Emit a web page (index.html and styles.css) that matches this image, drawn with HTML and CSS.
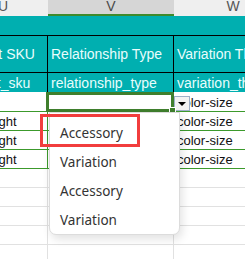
FILE: index.html
```html
<!DOCTYPE html>
<html lang="en">

<head>
    <meta charset="UTF-8" />
    <title>Sheet dropdown</title>
    <link rel="stylesheet" href="styles.css">
</head>

<body>
    <div class="sheet">
        <div class="col-head">U</div>
        <div class="col-head active">V</div>
        <div class="col-head">W</div>

        <div class="band"></div>

        <div class="cell head">Parent SKU</div>
        <div class="cell head">Relationship Type</div>
        <div class="cell head">Variation Theme</div>

        <div class="cell field">parent_sku</div>
        <div class="cell field">relationship_type</div>
        <div class="cell field">variation_theme</div>

        <div class="cell data first"></div>
        <div class="cell data first selected">
            <div class="selection"><span class="handle"></span></div>
            <ul class="dropdown">
                <li>Accessory</li>
                <li>Variation</li>
                <li>Accessory</li>
                <li>Variation</li>
            </ul>
            <div class="highlight"></div>
        </div>
        <div class="cell data first">color-size<span class="drop-btn"></span></div>

        <div class="cell data">desk-light</div>
        <div class="cell data"></div>
        <div class="cell data">color-size</div>

        <div class="cell data">desk-light</div>
        <div class="cell data"></div>
        <div class="cell data">color-size</div>

        <div class="cell data">desk-light</div>
        <div class="cell data"></div>
        <div class="cell data">color-size</div>

        <div class="cell empty"></div>
        <div class="cell empty"></div>
        <div class="cell empty"></div>
        <div class="cell empty"></div>
        <div class="cell empty"></div>
        <div class="cell empty"></div>
        <div class="cell empty"></div>
        <div class="cell empty"></div>
        <div class="cell empty"></div>
        <div class="cell empty"></div>
        <div class="cell empty"></div>
        <div class="cell empty"></div>
        <div class="cell empty"></div>
        <div class="cell empty"></div>
        <div class="cell empty"></div>
    </div>
</body>

</html>
```

FILE: styles.css
```css
body {
    margin: 0;
    background-color: #ffffff;
    overflow: hidden;
    font-family: 'Liberation Sans', Arial, sans-serif;
}

.sheet {
    display: grid;
    grid-template-columns: 90px 126px 118px;
    grid-template-rows: 16px 20px 37px 19px 20px repeat(8, 19px);
    margin-left: -42px;
    width: 334px;
}

.col-head {
    background-color: #efefef;
    color: #555;
    font-size: 14px;
    line-height: 12px;
    text-align: center;
    overflow: hidden;
}

.col-head.active {
    background-color: #d6d6d6;
    border-bottom: 2px solid #3f8a2c;
    color: #4a4a4a;
}

.band {
    grid-column: 1 / 4;
    background-color: #00afb0;
    border-bottom: 1px solid #000;
}

.cell {
    box-sizing: border-box;
    white-space: nowrap;
    overflow: hidden;
    padding: 0 3px;
    font-size: 13px;
    display: flex;
    align-items: center;
}

.head,
.field {
    background-color: #00afb0;
    color: #e8fdfd;
    font-size: 14px;
    border-right: 1px solid #000;
}

.head {
    border-bottom: 1px solid #000;
}

.data {
    color: #111;
    border-bottom: 1px solid #3c9a2c;
    border-right: 1px solid #3c9a2c;
    align-items: flex-end;
    padding-bottom: 1px;
}

.empty {
    border-bottom: 1px solid #e1e1e1;
    border-right: 1px solid #e1e1e1;
}

.selected {
    position: relative;
    overflow: visible;
    z-index: 2;
}

.data.first {
    overflow: visible;
    position: relative;
}

.selection {
    position: absolute;
    left: -2px;
    top: 0;
    right: -1px;
    bottom: -1px;
    border: 3px solid #3f7f2d;
}

.handle {
    position: absolute;
    right: -5px;
    bottom: -5px;
    width: 5px;
    height: 5px;
    background-color: #3f7f2d;
    border: 1px solid #fff;
}

.dropdown {
    position: absolute;
    left: 1px;
    top: 20px;
    width: 131px;
    height: 123px;
    box-sizing: border-box;
    margin: 0;
    padding: 6px 0 0 10px;
    list-style: none;
    background-color: #fff;
    border: 1px solid #dcdcdc;
    border-radius: 0 0 7px 7px;
    box-shadow: 2px 4px 10px rgba(0, 0, 0, 0.12);
    font-family: 'Noto Sans', sans-serif;
    font-size: 13.5px;
    color: #333;
}

.dropdown li {
    height: 29px;
    line-height: 29px;
}

.highlight {
    position: absolute;
    left: -8px;
    top: 22px;
    width: 100px;
    height: 33px;
    box-sizing: border-box;
    border: 3px solid #f23d3d;
}

.drop-btn {
    position: absolute;
    left: 0;
    top: 4px;
    width: 16px;
    height: 15px;
    box-sizing: border-box;
    background-color: #f3f3f3;
    border: 1px solid #9fb0c8;
}

.drop-btn::after {
    content: "";
    position: absolute;
    left: 3px;
    top: 5px;
    border-left: 4px solid transparent;
    border-right: 4px solid transparent;
    border-top: 4px solid #000;
}
```
